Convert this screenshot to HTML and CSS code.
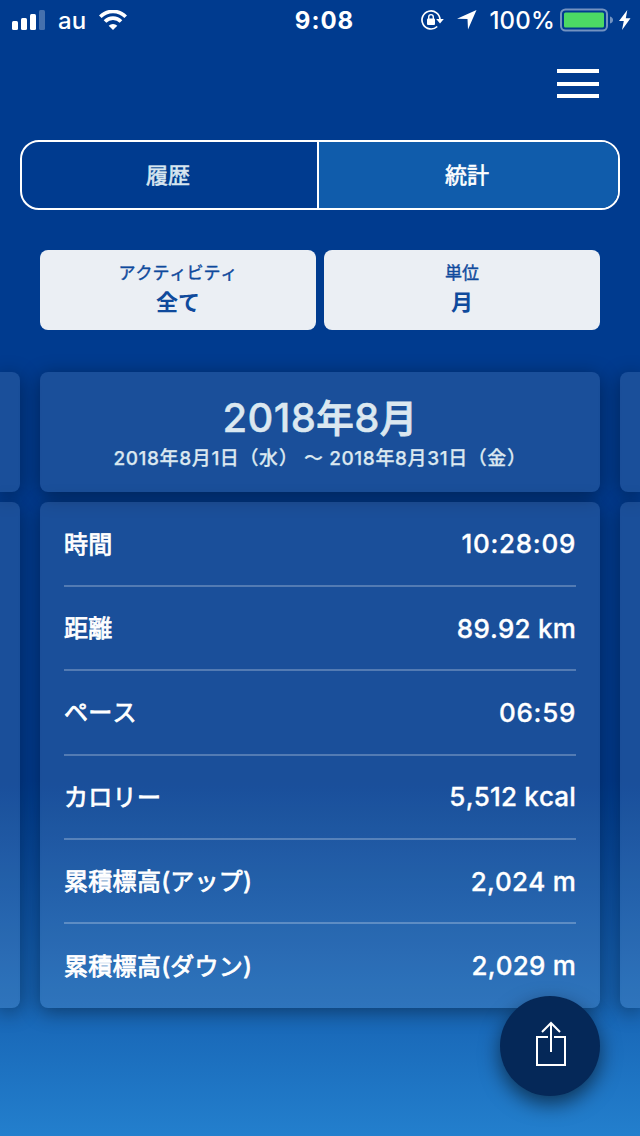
FILE: index.html
```
<!DOCTYPE html>
<html lang="ja">

<head>
	<meta charset="utf-8">
	<meta name="viewport" content="width=device-width, initial-scale=1.0">
	<title>統計</title>
	<link rel="stylesheet" href="styles.css">
</head>

<body>
	<header class="statusbar">
		<div class="left">
			<svg class="signal" width="34" height="20" viewBox="0 0 34 20" fill="#fff">
				<rect x="0" y="11" width="6" height="9" rx="1.5" />
				<rect x="9" y="8" width="6" height="12" rx="1.5" />
				<rect x="18" y="4" width="6" height="16" rx="1.5" />
				<rect x="27" y="0" width="6" height="20" rx="1.5" opacity=".27" />
			</svg>
			<span class="carrier">au</span>
			<svg class="wifi" width="28" height="20" viewBox="0 0 28 20">
				<g fill="none" stroke="#fff" stroke-width="3.7">
					<path d="M1.3 6.7a18 18 0 0 1 25.4 0" />
					<path d="M6 11.5a11.4 11.4 0 0 1 16 0" />
				</g>
				<path d="M9.7 15.8a6.2 6.2 0 0 1 8.6 0L14 20z" fill="#fff" />
			</svg>
		</div>
		<span class="clock">9:08</span>
		<div class="right">
			<svg class="lock" width="23" height="20" viewBox="0 0 23 20">
				<path d="M19 10A9 9 0 1 0 16.2 16.5" fill="none" stroke="#fff" stroke-width="1.7" />
				<path d="M15.2 9h7.6L19 13.4z" fill="#fff" />
				<rect x="6" y="8.5" width="8" height="6.5" rx="1" fill="#fff" />
				<path d="M7.7 9V6.9a2.3 2.3 0 0 1 4.6 0V9" fill="none" stroke="#fff" stroke-width="1.4" />
			</svg>
			<svg class="arrow" width="20" height="20" viewBox="0 0 20 20">
				<path d="M19.5 0L11 19.6 10.5 9 0 8.7z" fill="#fff" />
			</svg>
			<span class="percent">100%</span>
			<svg class="battery" width="54" height="24" viewBox="0 0 54 24">
				<rect x="1" y="1.5" width="46" height="21" rx="4.5" fill="none" stroke="#fff" stroke-width="2" opacity=".45" />
				<rect x="4" y="4.5" width="40" height="15" rx="1.5" fill="#4cd964" />
				<path d="M50 8.5q3 1 3 3.5t-3 3.5z" fill="#fff" opacity=".45" />
			</svg>
			<svg class="bolt" width="12" height="20" viewBox="0 0 12 20">
				<path d="M8.3 0L0 11h4.8L3 20 11.5 8.2H6.8z" fill="#fff" />
			</svg>
		</div>
	</header>

	<nav class="topnav">
		<button class="burger" aria-label="メニュー"><i></i><i></i><i></i></button>
	</nav>

	<main>
		<div class="tabs">
			<button class="tab">履歴</button>
			<button class="tab valgt">統計</button>
		</div>

		<div class="filters">
			<button class="filter"><small>アクティビティ</small><b>全て</b></button>
			<button class="filter"><small>単位</small><b>月</b></button>
		</div>

		<div class="slider">
			<section class="slide prev">
				<div class="card period"></div>
				<div class="card stats"></div>
			</section>

			<section class="slide">
				<div class="card period">
					<h1>2018<span>年</span>8<span>月</span></h1>
					<p>2018年8月1日（水） 〜 2018年8月31日（金）</p>
				</div>
				<dl class="card stats">
					<div class="row"><dt>時間</dt><dd class="time">10:28:09</dd></div>
					<div class="row"><dt>距離</dt><dd>89.92 km</dd></div>
					<div class="row"><dt>ペース</dt><dd class="time">06:59</dd></div>
					<div class="row"><dt>カロリー</dt><dd>5,512 kcal</dd></div>
					<div class="row"><dt>累積標高(アップ)</dt><dd>2,024 m</dd></div>
					<div class="row"><dt>累積標高(ダウン)</dt><dd>2,029 m</dd></div>
				</dl>
			</section>

			<section class="slide next">
				<div class="card period"></div>
				<div class="card stats"></div>
			</section>
		</div>
	</main>

	<button class="share" aria-label="共有">
		<svg width="30" height="46" viewBox="0 0 30 46" fill="none" stroke="#fff" stroke-width="2">
			<path d="M12 16H1v28h28V16H18" />
			<path d="M15 31V2M6 11l9-9 9 9" />
		</svg>
	</button>
</body>

</html>
```
FILE: styles.css
```
* {
	box-sizing: border-box;
}

body {
	margin: 0;
	height: 1136px;
	overflow: hidden;
	color: #fff;
	font-family: Inter, "Noto Sans CJK JP", sans-serif;
	font-kerning: none;
	background: linear-gradient(#003b8f 0, #003b8f 780px, #1764b4 1000px, #237fcd 1136px);
}

button {
	margin: 0;
	padding: 0;
	border: 0;
	color: inherit;
	font-family: inherit;
	font-kerning: none;
	background: none;
}

svg {
	display: block;
	flex: none;
}

/* status bar */
.statusbar {
	display: grid;
	grid-template-columns: 1fr auto 1fr;
	align-items: center;
	height: 40px;
	padding: 0 9px 0 12px;
	font-size: 24px;
	line-height: 38px;
	font-weight: 500;
}

.statusbar span {
	padding-top: 2px;
}

.left,
.right {
	display: flex;
	align-items: center;
}

.right {
	justify-content: flex-end;
}

.carrier {
	margin: 0 13px 0 12px;
}

.statusbar .clock {
	padding-left: 6px;
	font-weight: 700;
	letter-spacing: 1px;
}

.arrow {
	margin: 0 12px 0 13px;
}

.percent {
	letter-spacing: .2px;
}

.battery {
	margin: 0 5px 0 5px;
}

/* menu button */
.topnav {
	display: flex;
	justify-content: flex-end;
	height: 100px;
	padding: 29px 41px 0 0;
}

.burger {
	display: flex;
	flex-direction: column;
	gap: 8.5px;
	height: 30px;
}

.burger i {
	width: 42px;
	height: 4px;
	background: #fff;
}

/* tabs */
.tabs {
	display: flex;
	height: 70px;
	margin: 0 20px;
	border: 2px solid #fff;
	border-radius: 19px;
	overflow: hidden;
}

.tab {
	flex: 1;
	padding: 0 3px 4px 0;
	color: #d8e6f0;
	font-size: 22px;
	-webkit-text-stroke: .6px;
}

.tab.valgt {
	flex: 0 0 301px;
	border-left: 2px solid #fff;
	color: #fff;
	background: #105cab;
}

/* filters */
.filters {
	display: flex;
	gap: 8px;
	margin: 40px 40px 42px;
}

.filter {
	display: flex;
	flex: 1;
	flex-direction: column;
	align-items: center;
	height: 80px;
	padding-top: 9px;
	border-radius: 8px;
	color: #0f4a9c;
	background: #ebeff4;
}

.filter small {
	font-size: 17px;
	line-height: 28px;
	-webkit-text-stroke: .4px;
}

.filter b {
	font-size: 22px;
	line-height: 31px;
}

/* months */
.slider {
	display: flex;
	gap: 20px;
}

.slide {
	flex: 0 0 560px;
}

.prev,
.next {
	flex-basis: 20px;
}

.card {
	border-radius: 8px;
	background: rgba(255, 255, 255, .1);
	box-shadow: 0 4px 20px rgba(0, 0, 0, .4);
}

.prev .card {
	border-radius: 0 8px 8px 0;
}

.next .card {
	border-radius: 8px 0 0 8px;
}

.period {
	height: 120px;
	margin-bottom: 10px;
	padding-top: 20px;
	color: #dbe8f0;
	text-align: center;
}

.period h1 {
	margin: 0;
	font-size: 40px;
	line-height: 52px;
	font-weight: 500;
	letter-spacing: .4px;
	-webkit-text-stroke: .4px;
}

.period h1 span {
	font-size: 37.5px;
	line-height: 1;
	-webkit-text-stroke: .9px;
}

.period p {
	margin: 1px 0 0;
	font-size: 19px;
	line-height: 28px;
	font-weight: 500;
	letter-spacing: .6px;
	-webkit-text-stroke: .25px;
}

.stats {
	height: 506px;
	margin: 0;
	padding: .5px 24px 0;
}

.row {
	display: flex;
	align-items: center;
	justify-content: space-between;
	height: 84.4px;
	border-bottom: 2px solid rgba(255, 255, 255, .25);
}

.row:last-child {
	height: 83px;
	border: 0;
}

.prev .stats,
.next .stats {
	padding: 0;
}

dt {
	padding-bottom: 3px;
	font-size: 24px;
	letter-spacing: .3px;
	-webkit-text-stroke: .8px;
}

dd {
	margin: 0;
	font-size: 26px;
	font-weight: 500;
	letter-spacing: .2px;
	-webkit-text-stroke: .3px;
}

.time {
	letter-spacing: .7px;
}

/* floating share button */
.share {
	position: absolute;
	top: 996px;
	left: 500px;
	display: flex;
	align-items: center;
	justify-content: center;
	width: 100px;
	height: 100px;
	padding: 0 0 4px 2px;
	border-radius: 50%;
	background: #052858;
	box-shadow: 0 8px 20px rgba(0, 0, 0, .55);
}
```
